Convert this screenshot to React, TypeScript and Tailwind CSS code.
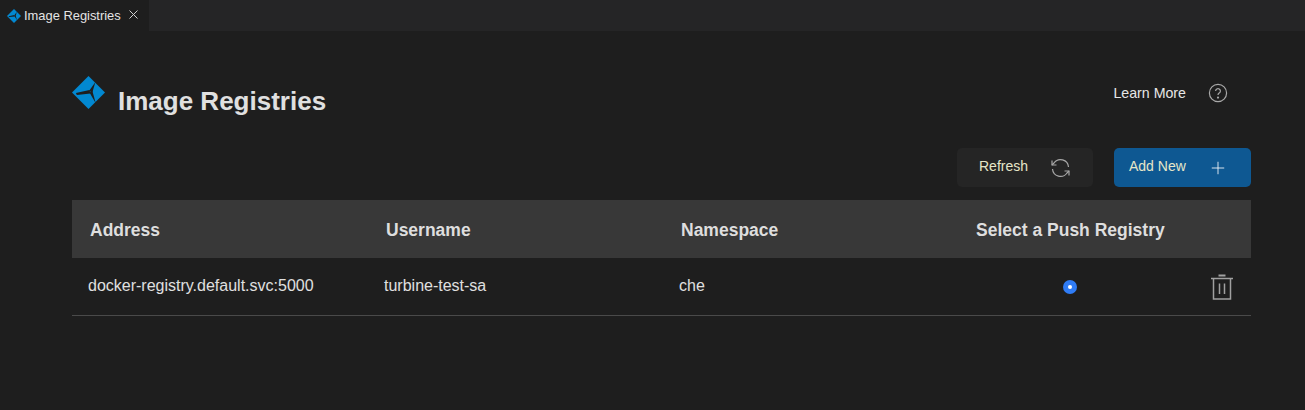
import { Plus } from "lucide-react";

const columns = [
  { label: "Address", width: "w-[296px]" },
  { label: "Username", width: "w-[295px]" },
  { label: "Namespace", width: "w-[295px]" },
];

const Logo = ({ size }: { size: number }) => (
  <svg width={size} height={size} viewBox="0 0 34 34">
    <path d="M17 0L34 17L17 34L0 17Z" fill="#0288d1" />
    <path d="M4 17.5L18 14.5L19 18L5 19.5Z" fill="#1e1e1e" />
    <path d="M17.5 15.5L24 6.5L21 17Z" fill="#1e1e1e" />
    <path d="M18 17L21 15.5L24.5 28Z" fill="#1e1e1e" />
  </svg>
);

export default function App() {
  return (
    <div className="w-[1305px] h-[410px] bg-[#1e1e1e] overflow-hidden font-['Liberation_Sans',sans-serif]">
      <div className="flex h-[31px] bg-[#252526]">
        <div className="flex items-center w-[149px] h-full bg-[#1e1e1e] pl-[7px]">
          <Logo size={14} />
          <span className="ml-[3px] text-[12.9px] text-[#e4e4e4]">Image Registries</span>
          <svg className="ml-[8px] mb-[2px]" width="9" height="9" viewBox="0 0 9 9" stroke="#d0d0d0" strokeWidth="1">
            <path d="M0.5 0.5L8.5 8.5M8.5 0.5L0.5 8.5" />
          </svg>
        </div>
      </div>

      <div className="pl-[72px] pr-[54px]">
        <div className="flex justify-between h-[117px]">
          <div className="flex items-start pt-[45px]">
            <Logo size={33} />
            <h1 className="ml-[13px] mt-[10px] text-[26px] leading-[30px] font-bold text-[#e0e0e0]">Image Registries</h1>
          </div>
          <div className="flex items-start pt-[50px] pr-[23px]">
            <span className="text-[14.2px] leading-[24px] text-[#e6e6e6]">Learn More</span>
            <svg className="ml-[22px] mt-[2px]" width="20" height="20" viewBox="0 0 20 20" fill="none" stroke="#a8a8a8" strokeWidth="1.2">
              <circle cx="10" cy="10" r="8.6" />
              <path d="M7.6 8a2.4 2.4 0 1 1 3.6 2.1c-.8.5-1.2 1-1.2 1.9" />
              <circle cx="10" cy="14.6" r="0.5" fill="#a8a8a8" />
            </svg>
          </div>
        </div>

        <div className="flex justify-end gap-[21px]">
          <button className="flex items-center w-[136px] h-[39px] rounded-[5px] bg-[#252525] pl-[22px] pb-[2px] text-[14px] text-[#e6e6c8]">
            Refresh
            <svg className="ml-[23px] mt-[2px]" width="19" height="20" viewBox="0 0 19 20" fill="none" stroke="#a8a8a8" strokeWidth="1.2">
              <path d="M17.5 9A8 8 0 0 0 3 5L1 7" />
              <path d="M1 2.5V7H5.5" />
              <path d="M1.5 11A8 8 0 0 0 16 15L18 13" />
              <path d="M18 17.5V13H13.5" />
            </svg>
          </button>
          <button className="flex items-center w-[137px] h-[39px] rounded-[5px] bg-[#0e5892] pl-[15px] pb-[2px] text-[14px] text-[#e6e6c8]">
            Add New
            <Plus className="ml-[22px] mt-[2px] text-white" size={20} strokeWidth={1} />
          </button>
        </div>

        <div className="mt-[13px] flex items-center h-[58px] bg-[#383838] pl-[18px] pt-[2px] text-[17.5px] font-bold text-[#dedede]">
          {columns.map((col) => (
            <div key={col.label} className={col.width}>{col.label}</div>
          ))}
          <div>Select a Push Registry</div>
        </div>

        <div className="flex items-center h-[58px] border-b border-[#4a4a4a] pl-[16px] text-[16px] text-[#e0e0e0]">
          <div className="w-[296px] mb-[2px]">docker-registry.default.svc:5000</div>
          <div className="w-[295px] mb-[2px]">turbine-test-sa</div>
          <div className="w-[384px] mb-[2px]">che</div>
          <div className="flex items-center justify-center w-[14px] h-[14px] rounded-full bg-[#2f7cf6] mt-[1px]">
            <div className="w-[4px] h-[4px] rounded-full bg-white" />
          </div>
          <svg className="ml-[133px]" width="24" height="28" viewBox="0 0 24 28" fill="none" stroke="#a0a0a0" strokeWidth="1.5">
            <path d="M1 5.5H23" />
            <path d="M8.5 2.5H15.5" strokeWidth="2" />
            <path d="M3.5 5.5V26H20.5V5.5" />
            <path d="M9.5 10.5V21M14.5 10.5V21" />
          </svg>
        </div>
      </div>
    </div>
  );
}
